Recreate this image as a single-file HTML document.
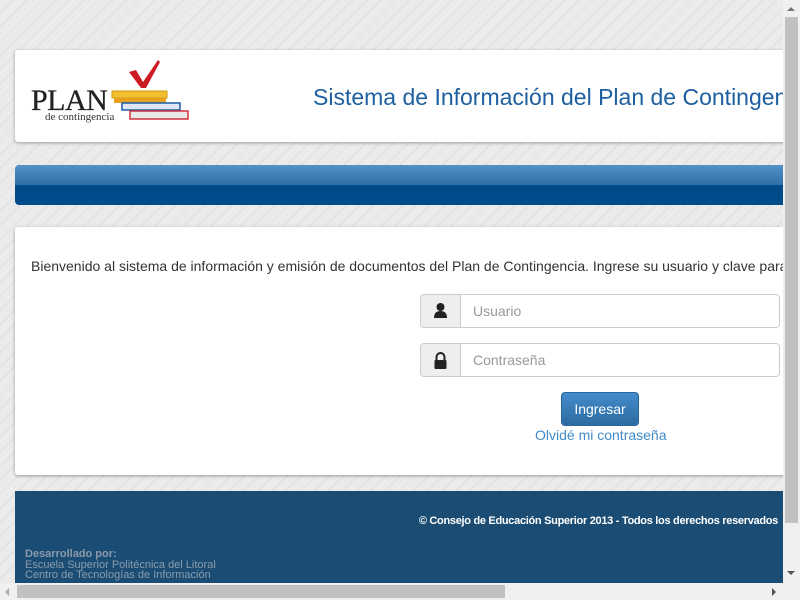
<!DOCTYPE html>
<html><head><meta charset="utf-8"><style>
html,body{margin:0;padding:0;width:800px;height:600px;overflow:hidden;font-family:"Liberation Sans",sans-serif;}
body{background:#ebebeb repeating-linear-gradient(135deg,#ebebeb 0,#ebebeb 9px,#dedede 9px,#dedede 10px);position:relative}
#clip{position:absolute;left:0;top:0;width:783px;height:583px;overflow:hidden}
.abs{position:absolute}
.panel{background:#fff;box-shadow:0 1px 3px rgba(0,0,0,.35);border-radius:3px}
.inp{position:absolute;left:420px;width:360px;height:34px;border:1px solid #ccc;border-radius:4px;background:#fff;box-sizing:border-box}
.inp .ad{position:absolute;left:0;top:0;width:39px;height:32px;background:#eee;border-right:1px solid #ccc;border-radius:4px 0 0 4px}
.inp .ph{position:absolute;left:52px;top:8px;font-size:14px;color:#999}
</style></head><body>
<div id="clip">
<div class="abs panel" style="left:15px;top:50px;width:800px;height:92px"></div>
<div class="abs" style="left:31px;top:84px;font-family:'Liberation Serif',serif;font-size:30px;color:#222;letter-spacing:-0.5px;-webkit-text-stroke:0.3px #222">PLAN</div>
<div class="abs" style="left:45px;top:111px;font-family:'Liberation Serif',serif;font-size:11px;color:#333">de contingencia</div>
<svg class="abs" style="left:110px;top:58px" width="82" height="68">
<rect x="2" y="33" width="55" height="7" fill="#f0c030" stroke="#d49a10"/>
<rect x="4" y="40" width="52" height="5" fill="#e7a020"/>
<rect x="12" y="45" width="58" height="7" fill="#dfe6f5" stroke="#1a5da8" stroke-width="1.5"/>
<rect x="20" y="53" width="58" height="8" fill="#e8e8e8" stroke="#d0303a" stroke-width="1.5"/>
<path d="M19 14 L26 12 L33 24 L48 2 L50 4 L36 30 L31 30 Z" fill="#cc1b23"/>
</svg>
<div class="abs" style="left:313px;top:84px;font-size:23px;color:#1d5fa0;white-space:nowrap">Sistema de Información del Plan de Contingencia</div>
<div class="abs" style="left:15px;top:165px;width:800px;height:40px;border-radius:4px;overflow:hidden;background:linear-gradient(#5492c6 0%,#2d6fa8 50%,#004c8a 50%,#004c8a)"></div>
<div class="abs panel" style="left:15px;top:227px;width:800px;height:248px"></div>
<div class="abs" style="left:31px;top:258px;font-size:14px;color:#333;white-space:nowrap">Bienvenido al sistema de información y emisión de documentos del Plan de Contingencia. Ingrese su usuario y clave para continuar.</div>
<div class="inp" style="top:294px"><div class="ad"><svg width="39" height="32"><circle cx="19.5" cy="12" r="4" fill="#222"/><path d="M13 23 Q13 16 19.5 16 Q26 16 26 23 Z" fill="#222"/></svg></div><div class="ph">Usuario</div></div>
<div class="inp" style="top:343px"><div class="ad"><svg width="39" height="32"><path d="M15.5 16 V13 a4 4 0 0 1 8 0 V16" stroke="#222" stroke-width="2" fill="none"/><rect x="13.5" y="16" width="12" height="9" rx="1" fill="#222"/></svg></div><div class="ph">Contraseña</div></div>
<div class="abs" style="left:561px;top:392px;width:78px;height:34px;border-radius:4px;background:linear-gradient(#428bca,#2d6ca2);border:1px solid #2b669a;box-sizing:border-box;color:#fff;font-size:14px;text-align:center;line-height:32px">Ingresar</div>
<div class="abs" style="left:535px;top:427px;font-size:14px;color:#428bca">Olvidé mi contraseña</div>
<div class="abs" style="left:15px;top:491px;width:800px;height:110px;background:#1b4d74"></div>
<div class="abs" style="left:300px;width:478px;text-align:right;top:515px;font-size:11px;font-weight:bold;color:#fff;white-space:nowrap;letter-spacing:-0.3px">© Consejo de Educación Superior 2013 - Todos los derechos reservados</div>
<div class="abs" style="left:25px;top:549px;font-size:11px;color:#8a9aaa;line-height:10.5px"><b>Desarrollado por:</b><br>Escuela Superior Politécnica del Litoral<br>Centro de Tecnologías de Información</div>
</div>
<div class="abs" style="left:783px;top:0;width:17px;height:600px;background:#f0f0f0"></div>
<div class="abs" style="left:785px;top:17px;width:13px;height:506px;background:#c1c1c1"></div>
<div class="abs" style="left:0;top:583px;width:800px;height:17px;background:#f0f0f0"></div>
<div class="abs" style="left:17px;top:585px;width:488px;height:13px;background:#c1c1c1"></div>
<div class="abs" style="left:787px;top:7px;width:0;height:0;border-left:4px solid transparent;border-right:4px solid transparent;border-bottom:4px solid #777"></div>
<div class="abs" style="left:787px;top:571px;width:0;height:0;border-left:4px solid transparent;border-right:4px solid transparent;border-top:4px solid #555"></div>
<div class="abs" style="left:5px;top:588px;width:0;height:0;border-top:4px solid transparent;border-bottom:4px solid transparent;border-right:4px solid #aaa"></div>
<div class="abs" style="left:772px;top:588px;width:0;height:0;border-top:4px solid transparent;border-bottom:4px solid transparent;border-left:4px solid #555"></div>
</body></html>
